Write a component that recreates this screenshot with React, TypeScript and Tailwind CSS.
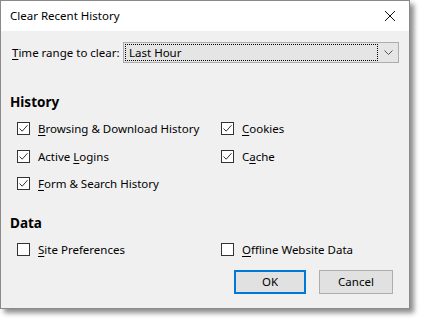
import React from 'react';

const FONT = { fontFamily: '"Noto Sans", "Segoe UI", sans-serif' };

function Check({ checked, label, u }: { checked: boolean; label: string; u: number }) {
    const before = label.slice(0, u);
    const key = label.slice(u, u + 1);
    const after = label.slice(u + 1);
    return (
        <div className="flex items-center h-[27.5px]">
            <div className="w-[13px] h-[13px] border border-[#333333] bg-white flex items-center justify-center shrink-0">
                {checked && (
                    <svg width="11" height="11" viewBox="0 0 11 11">
                        <path d="M1.5 5.5 L4.2 8.2 L9.5 2.2" fill="none" stroke="#333333" strokeWidth="1" />
                    </svg>
                )}
            </div>
            <span className="ml-[8px] text-[11.5px] text-black whitespace-nowrap">
                {before}<span className="underline underline-offset-2">{key}</span>{after}
            </span>
        </div>
    );
}

export default function App() {
    return (
        <div className="w-[425px] h-[323px] bg-white" style={FONT}>
            <div className="w-[410px] h-[309px] border border-[#8a8a8a] flex flex-col shadow-[4px_4px_5px_rgba(0,0,0,0.45)]">
                {/* Title bar */}
                <div className="h-[30px] bg-white flex items-center justify-between pl-[9px] pr-[9px] shrink-0">
                    <span className="text-[11.5px] text-black">Clear Recent History</span>
                    <svg width="12" height="12" viewBox="0 0 12 12" className="mr-[4px]">
                        <path d="M1 1 L11 11 M11 1 L1 11" stroke="#111" strokeWidth="1" />
                    </svg>
                </div>

                {/* Body */}
                <div className="flex-1 bg-[#f0f0f0] flex flex-col">
                    <div className="flex items-center mt-[11px] h-[21px] pl-[11px]">
                        <span className="w-[111px] text-[11.5px] text-black whitespace-nowrap">
                            <span className="underline underline-offset-2">T</span>ime range to clear:
                        </span>
                        <div className="w-[276px] h-[21px] border border-[#adadad] bg-[#e5e5e5] flex items-stretch">
                            <div className="flex-1 m-[1px] border border-dotted border-black flex items-center pl-[3px] text-[11.5px] text-black">
                                Last Hour
                            </div>
                            <div className="w-[19px] flex items-center justify-center">
                                <svg width="9" height="5" viewBox="0 0 9 5">
                                    <path d="M0.5 0.5 L4.5 4.5 L8.5 0.5" fill="none" stroke="#555" strokeWidth="1" />
                                </svg>
                            </div>
                        </div>
                    </div>

                    <div className="mt-[30px] pl-[9px] h-[18px] flex items-center text-[13.5px] font-bold text-black">History</div>
                    <div className="mt-[4px] pl-[16px] grid grid-cols-[204px_1fr]">
                        <Check checked label="Browsing & Download History" u={0} />
                        <Check checked label="Cookies" u={0} />
                        <Check checked label="Active Logins" u={7} />
                        <Check checked label="Cache" u={1} />
                        <Check checked label="Form & Search History" u={0} />
                    </div>

                    <div className="mt-[17px] pl-[9px] h-[18px] flex items-center text-[13.5px] font-bold text-black">Data</div>
                    <div className="mt-[3px] pl-[16px] grid grid-cols-[204px_1fr]">
                        <Check checked={false} label="Site Preferences" u={0} />
                        <Check checked={false} label="Offline Website Data" u={0} />
                    </div>

                    <div className="mt-[7px] flex justify-end gap-[13px] pr-[16px]">
                        <button className="w-[72px] h-[24px] border-2 border-[#0078d7] bg-[#e1e1e1] text-[11.5px] text-black flex items-center justify-center">
                            OK
                        </button>
                        <button className="w-[74px] h-[24px] border border-[#adadad] bg-[#e1e1e1] text-[11.5px] text-black flex items-center justify-center">
                            Cancel
                        </button>
                    </div>
                </div>
            </div>
        </div>
    );
}
